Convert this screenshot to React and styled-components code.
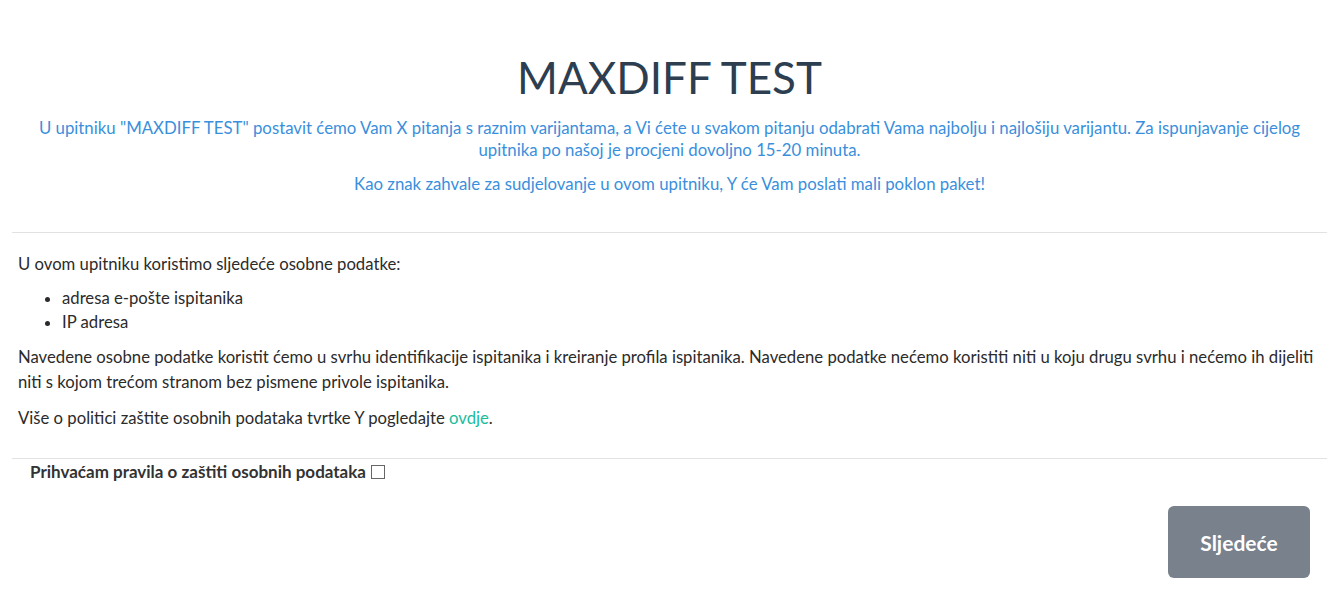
import React, { useState } from "react";
import styled, { createGlobalStyle } from "styled-components";

const GlobalStyle = createGlobalStyle`
  html, body {
    margin: 0;
    padding: 0;
    background: #fff;
  }
  body {
    font-family: Lato, "Open Sans", sans-serif;
    color: #2b2b2b;
  }
`;

const Page = styled.div`
  padding: 0 10px 0 12px;
`;

const Header = styled.header`
  text-align: center;
  padding: 50px 0 25px;
`;

const Title = styled.h1`
  margin: 0 0 13px;
  font-size: 44px;
  font-weight: 400;
  line-height: 54px;
  color: #2c3e50;
`;

const Lead = styled.p`
  margin: 0 0 12px;
  font-size: 16.8px;
  line-height: 22px;
  color: #3a8fdc;
`;

const Rule = styled.hr`
  margin: 0;
  border: 0;
  border-top: 1px solid #e2e2e2;
`;

const Content = styled.section`
  padding: 19px 6px 16px;
  font-size: 16.7px;
  line-height: 25px;
`;

const Para = styled.p`
  margin: 0 0 11px;

  &:first-child {
    margin-bottom: 9px;
  }
`;

const List = styled.ul`
  margin: 0 0 11px;
  padding-left: 44px;
  line-height: 24px;
`;

const Link = styled.a`
  color: #1abc9c;
  text-decoration: none;
`;

const Consent = styled.label`
  display: flex;
  align-items: center;
  gap: 5px;
  padding: 2px 18px 6px;
  font-size: 17px;
  font-weight: 700;
  color: #333;
`;

const Box = styled.input`
  appearance: none;
  width: 14px;
  height: 14px;
  margin: 0;
  border: 1px solid #666;
  background: #fff;

  &:checked {
    background: #3498db;
  }
`;

const Actions = styled.div`
  display: flex;
  justify-content: flex-end;
  padding: 18px 17px 0 0;
`;

const NextButton = styled.button`
  width: 142px;
  height: 72px;
  border: 0;
  border-radius: 6px;
  background: #78818c;
  color: #fff;
  font-family: Lato, sans-serif;
  font-size: 21px;
  font-weight: 700;
  cursor: pointer;
`;

const App = () => {
  const [accepted, setAccepted] = useState(false);

  return (
    <Page>
      <GlobalStyle />
      <Header>
        <Title>MAXDIFF TEST</Title>
        <Lead>
          U upitniku "MAXDIFF TEST" postavit ćemo Vam X pitanja s raznim varijantama, a Vi ćete u svakom pitanju
          odabrati Vama najbolju i najlošiju varijantu. Za ispunjavanje cijelog upitnika po našoj je procjeni dovoljno
          15-20 minuta.
        </Lead>
        <Lead>Kao znak zahvale za sudjelovanje u ovom upitniku, Y će Vam poslati mali poklon paket!</Lead>
      </Header>
      <Rule />
      <Content>
        <Para>U ovom upitniku koristimo sljedeće osobne podatke:</Para>
        <List>
          <li>adresa e-pošte ispitanika</li>
          <li>IP adresa</li>
        </List>
        <Para>
          Navedene osobne podatke koristit ćemo u svrhu identifikacije ispitanika i kreiranje profila ispitanika.
          Navedene podatke nećemo koristiti niti u koju drugu svrhu i nećemo ih dijeliti niti s kojom trećom stranom bez
          pismene privole ispitanika.
        </Para>
        <Para>
          Više o politici zaštite osobnih podataka tvrtke Y pogledajte <Link href="#">ovdje</Link>.
        </Para>
      </Content>
      <Rule />
      <Consent>
        Prihvaćam pravila o zaštiti osobnih podataka
        <Box type="checkbox" checked={accepted} onChange={(e) => setAccepted(e.target.checked)} />
      </Consent>
      <Actions>
        <NextButton>Sljedeće</NextButton>
      </Actions>
    </Page>
  );
};

export default App;
